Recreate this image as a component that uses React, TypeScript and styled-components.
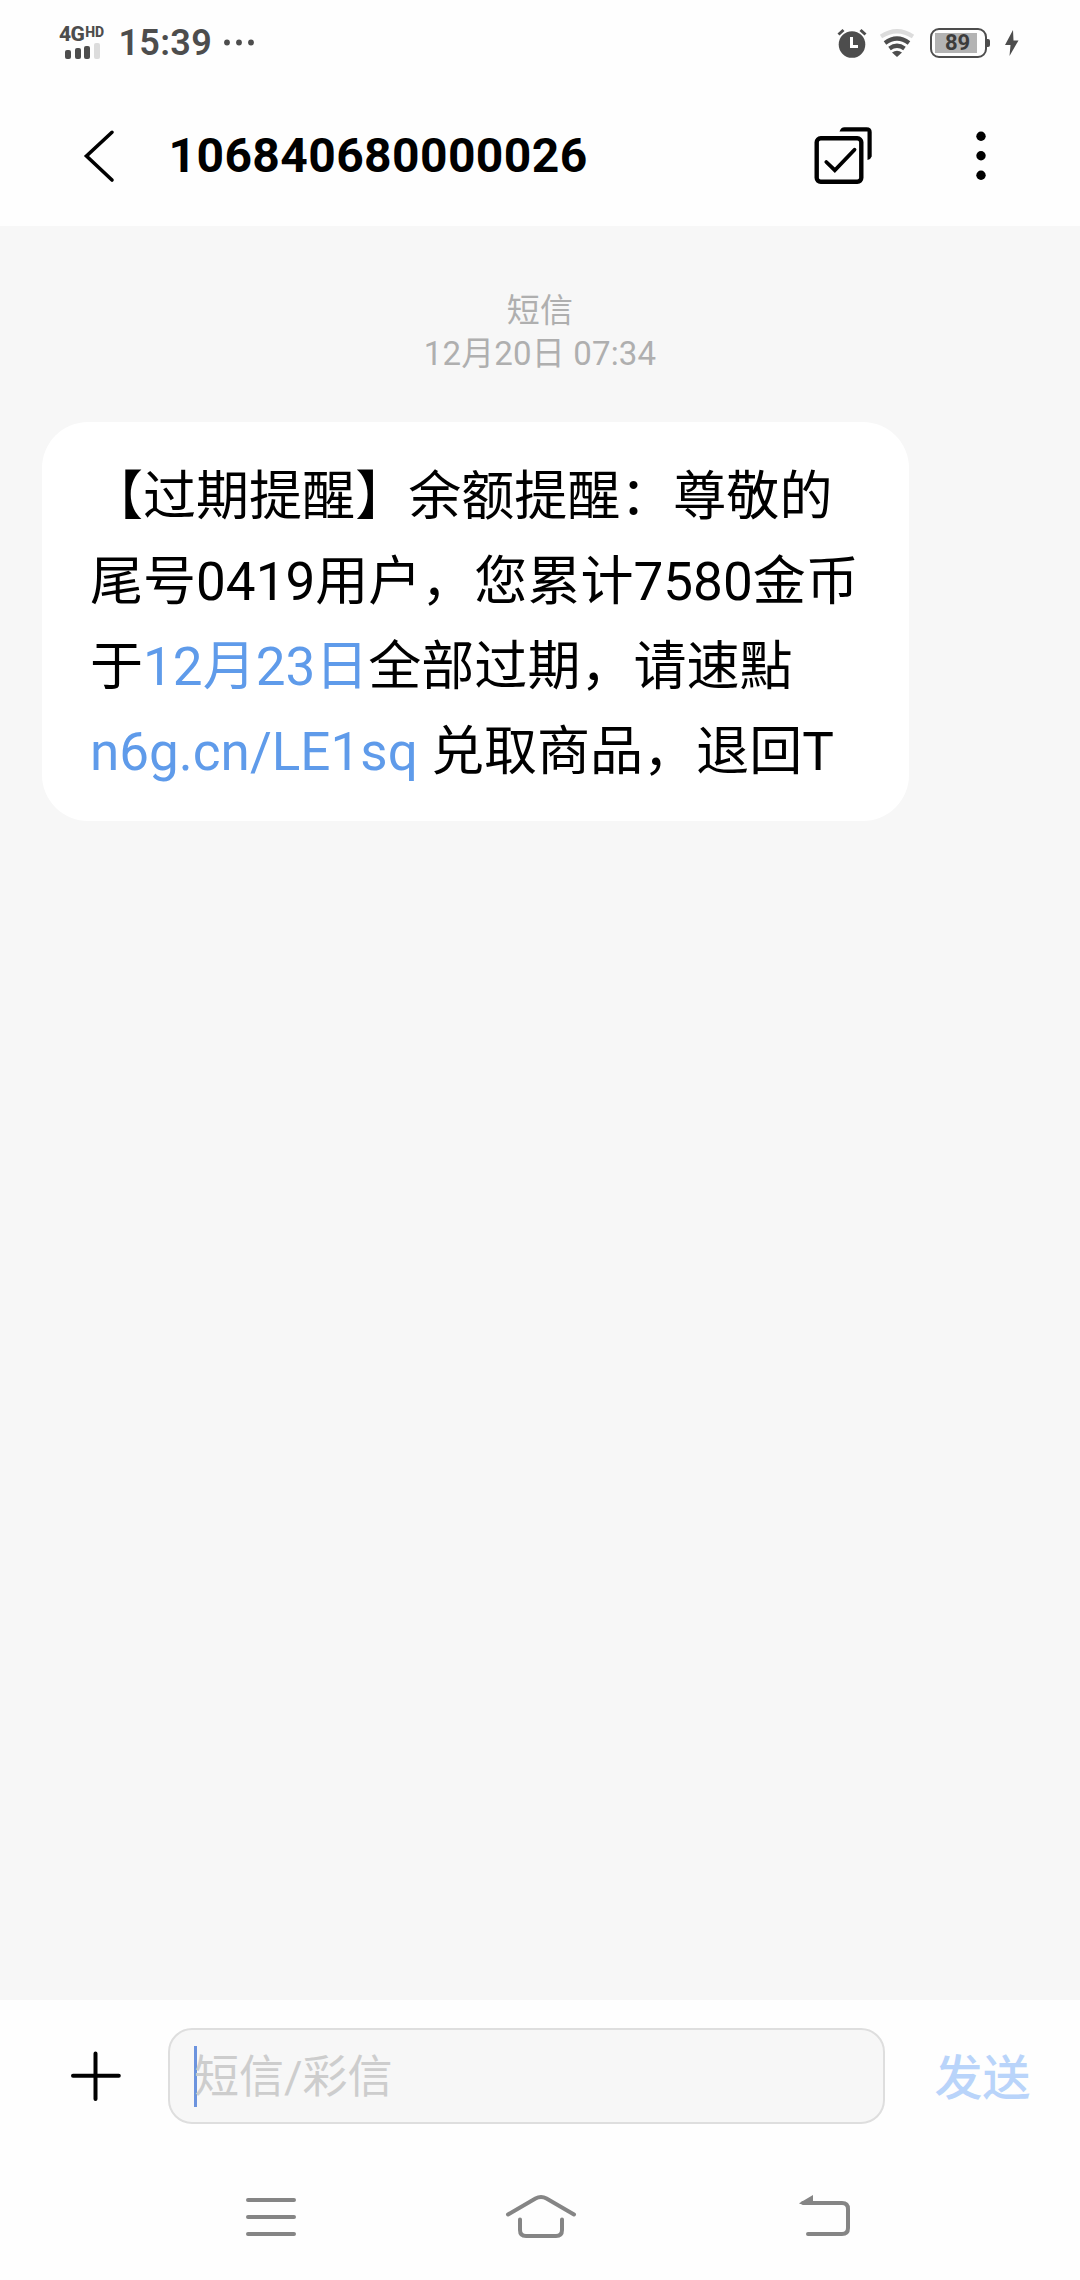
import React from "react";
import styled, { createGlobalStyle } from "styled-components";

const GlobalStyle = createGlobalStyle`
  * { box-sizing: border-box; }
  body {
    margin: 0;
    background: #fff;
    font-family: Roboto, "Noto Sans CJK SC", sans-serif;
    text-spacing-trim: space-all;
  }
  svg { display: block; flex: none; }
`;

const Screen = styled.main`
  width: 1080px;
  height: 2280px;
  display: flex;
  flex-direction: column;
  background: #fefefe;
`;

const StatusBar = styled.div`
  height: 86px;
  display: flex;
  align-items: center;
  padding: 0 60px 0 59px;
  color: #4d4d4d;
`;

const Network = styled.div`
  width: 47px;
  height: 32px;
  display: flex;
  flex-direction: column;
  justify-content: space-between;
`;

const NetworkLabel = styled.div`
  display: flex;
  align-items: flex-start;
  height: 15px;
  font-size: 21px;
  line-height: 15px;
  font-weight: 800;
  letter-spacing: -0.6px;
`;

const HdMark = styled.span`
  margin-left: 1px;
  font-size: 14px;
  line-height: 11px;
  letter-spacing: 0;
`;

const SignalBars = styled.div`
  display: flex;
  align-items: flex-end;
  gap: 3.5px;
  padding-left: 6px;
`;

const SignalBar = styled.i<{ $height: number; $faint?: boolean }>`
  width: 6px;
  height: ${(p) => p.$height}px;
  border-radius: 2px;
  background: ${(p) => (p.$faint ? "#dcdcdc" : "#4d4d4d")};
`;

const Clock = styled.time`
  margin: 0 0 0 12.5px;
  font-size: 36px;
  line-height: 40px;
  font-weight: 600;
  letter-spacing: 0.3px;
`;

const StatusDots = styled.svg`
  margin-left: 10px;
`;

const StatusIcons = styled.div`
  margin-left: auto;
  display: flex;
  align-items: center;
`;

const AlarmIcon = styled.svg`
  margin-right: 12px;
`;

const WifiIcon = styled.svg`
  margin-right: 15px;
`;

const Battery = styled.div`
  width: 57px;
  height: 30px;
  padding: 2.5px;
  border: 2.5px solid #4d4d4d;
  border-radius: 9px;
`;

const BatteryLevel = styled.div`
  width: 42px;
  height: 20px;
  display: flex;
  align-items: center;
  justify-content: center;
  padding-left: 4px;
  background: #b3b3b3;
  color: #3c3c3c;
  font-size: 22px;
  line-height: 20px;
  font-weight: 700;
`;

const BatteryTip = styled.i`
  width: 3px;
  height: 8px;
  background: #4d4d4d;
  border-radius: 0 2px 2px 0;
`;

const BoltIcon = styled.svg`
  margin-left: 14px;
`;

const Header = styled.header`
  height: 140px;
  display: flex;
  align-items: center;
  padding: 0 72px 0 82px;
`;

const IconButton = styled.button`
  display: flex;
  padding: 0;
  border: 0;
  background: none;
`;

const Title = styled.h1`
  flex: 1;
  margin: 0 0 0 52.5px;
  font-size: 48px;
  line-height: 60px;
  font-weight: 700;
  letter-spacing: 0.4px;
  color: #000;
`;

const SelectButton = styled(IconButton)`
  margin-right: 82px;
`;

const Conversation = styled.section`
  flex: 1;
  padding: 63px 42px 0;
  background: #f7f7f7;
`;

const Stamp = styled.div`
  margin-bottom: 47px;
  text-align: center;
  font-size: 33px;
  line-height: 43px;
  letter-spacing: 0.15px;
  color: #afafaf;
`;

const Bubble = styled.p`
  width: 867px;
  height: 399px;
  margin: 0;
  padding: 33px 48px 0;
  border-radius: 46px;
  background: #fff;
  font-size: 53.04px;
  line-height: 85px;
  color: #000;
`;

const Line = styled.span`
  display: block;
  white-space: nowrap;
`;

const Link = styled.a`
  color: #5f9bea;
`;

const Composer = styled.footer`
  height: 152px;
  display: flex;
  align-items: center;
  padding: 0 49.5px 0 70px;
`;

const Field = styled.div`
  width: 717px;
  height: 96px;
  margin: 0 auto 0 47px;
  padding-left: 24px;
  display: flex;
  align-items: center;
  border: 2px solid #dedede;
  border-radius: 24px;
  background: #f7f7f7;
`;

const Caret = styled.i`
  width: 3px;
  height: 61px;
  background: #6c93de;
`;

const Placeholder = styled.span`
  margin: 3px 0 0 -3px;
  font-size: 45px;
  line-height: 60px;
  font-weight: 400;
  color: #cdcdcd;
`;

const Send = styled.button`
  padding: 5px 0 0;
  border: 0;
  background: none;
  font-family: inherit;
  font-size: 48px;
  line-height: 60px;
  font-weight: 500;
  color: #b9d4fa;
`;

const NavBar = styled.nav`
  height: 128px;
  display: grid;
  grid-template-columns: 262px 293.5px 56px;
  align-items: center;
  padding-left: 243px;
`;

export default function App() {
  return (
    <Screen>
      <GlobalStyle />
      <StatusBar>
        <Network>
          <NetworkLabel>
            4G<HdMark>HD</HdMark>
          </NetworkLabel>
          <SignalBars>
            <SignalBar $height={9} />
            <SignalBar $height={11} />
            <SignalBar $height={13} />
            <SignalBar $height={16} $faint />
          </SignalBars>
        </Network>
        <Clock>15:39</Clock>
        <StatusDots width="34" height="8" fill="#4d4d4d">
          <circle cx="5" cy="3.5" r="2.9" />
          <circle cx="17" cy="3.5" r="2.9" />
          <circle cx="29" cy="3.5" r="2.9" />
        </StatusDots>
        <StatusIcons>
          <AlarmIcon width="30" height="30" viewBox="0 0 30 30">
            <circle cx="15" cy="16.5" r="13.3" fill="#4d4d4d" />
            <path d="M1.5 6.5 6.5 2M28.5 6.5 23.500 2" stroke="#4d4d4d" strokeWidth="3" />
            <path d="M14.500 9v9.500H21" fill="none" stroke="#fff" strokeWidth="3" />
          </AlarmIcon>
          <WifiIcon width="36" height="30" viewBox="0 0 36 30" fill="none" stroke="#4d4d4d" strokeWidth="4.200">
            <path d="M2 8.500Q18-2 34 8.500" stroke="#dcdcdc" />
            <path d="M6 15Q18 6 30 15M10.500 20.500Q18 15 25.500 20.500" />
            <path d="M13 24.500Q18 21 23 24.500L18 29Z" fill="#4d4d4d" stroke="none" />
          </WifiIcon>
          <Battery>
            <BatteryLevel>89</BatteryLevel>
          </Battery>
          <BatteryTip />
          <BoltIcon width="16" height="28" viewBox="0 0 16 28">
            <path d="M9 1 1 16h5.500L5.500 27 14.500 11.500H9.500Z" fill="#4d4d4d" />
          </BoltIcon>
        </StatusIcons>
      </StatusBar>

      <Header>
        <IconButton aria-label="返回">
          <svg width="34" height="54" viewBox="0 0 34 54" fill="none" stroke="#000" strokeWidth="3.600" strokeLinecap="round">
            <path d="M30 3.300 4.500 27 30 51" />
          </svg>
        </IconButton>
        <Title>106840680000026</Title>
        <SelectButton aria-label="选择">
          <svg width="60" height="60" viewBox="0 0 60 60" fill="none" stroke="#000" strokeWidth="4.400">
            <rect x="4.700" y="12.300" width="44.600" height="43.500" rx="4" />
            <path d="M14.300 36 22.800 44.200 42.500 23.700" strokeLinecap="round" strokeWidth="3.800" />
            <path d="M27.500 5.600C28.500 2.700 30 1.300 32.500 1.300H54.500Q59.700 1.300 59.700 6V30.500Q59 33 55.500 34V5.600H27.500Z" fill="#000" stroke="none" />
          </svg>
        </SelectButton>
        <IconButton aria-label="更多">
          <svg width="54" height="54" viewBox="0 0 54 54">
            <circle cx="27" cy="7.300" r="4.700" />
            <circle cx="27" cy="26.700" r="4.700" />
            <circle cx="27" cy="46.300" r="4.700" />
          </svg>
        </IconButton>
      </Header>

      <Conversation>
        <Stamp>
          <div>短信</div>
          <div>12月20日 07:34</div>
        </Stamp>
        <Bubble>
          <Line>【过期提醒】余额提醒：尊敬的</Line>
          <Line>尾号0419用户，您累计7580金币</Line>
          <Line>
            于<Link>12月23日</Link>全部过期，请速點
          </Line>
          <Line>
            <Link>n6g.cn/LE1sq</Link> 兑取商品，退回T
          </Line>
        </Bubble>
      </Conversation>

      <Composer>
        <IconButton aria-label="添加">
          <svg width="51" height="51" viewBox="0 0 51 51" stroke="#000" strokeWidth="4" strokeLinecap="round">
            <path d="M3 24.700H48.800M25.500 2.500V48" />
          </svg>
        </IconButton>
        <Field>
          <Caret />
          <Placeholder>短信/彩信</Placeholder>
        </Field>
        <Send>发送</Send>
      </Composer>

      <NavBar>
        <IconButton aria-label="菜单">
          <svg width="56" height="44" viewBox="0 0 56 44" stroke="#858585" strokeWidth="4" strokeLinecap="round">
            <path d="M5 6H51M5 23H51M5 40H51" />
          </svg>
        </IconButton>
        <IconButton aria-label="主页">
          <svg width="72" height="48" viewBox="0 0 72 48" fill="none" stroke="#858585" strokeWidth="4" strokeLinecap="round" strokeLinejoin="round">
            <path d="M3 22.500 30.500 6.500Q36 3.500 41.500 6.500L69 22.500" />
            <path d="M15 27.500V38Q15 44 21 44H51Q57 44 57 38V27.500" />
          </svg>
        </IconButton>
        <IconButton aria-label="返回上一级">
          <svg width="56" height="48" viewBox="0 0 56 48" fill="none" stroke="#858585" strokeWidth="4" strokeLinecap="round">
            <path d="M4 11H43Q49 11 49 17V36Q49 42 43 42H9" />
            <path d="M0.500 11 14 3V12H0.500Z" fill="#858585" stroke="none" />
          </svg>
        </IconButton>
      </NavBar>
    </Screen>
  );
}
